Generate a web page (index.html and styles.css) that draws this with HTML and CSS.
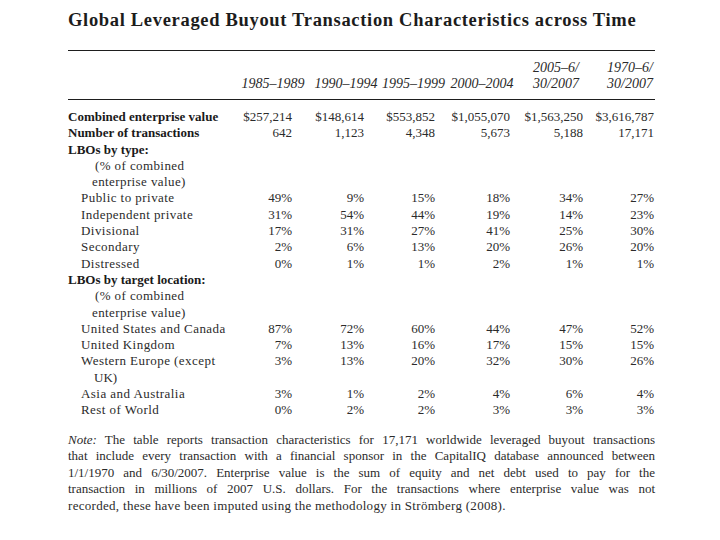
FILE: index.html
```html
<!DOCTYPE html>
<html lang="en">
<head>
<meta charset="utf-8">
<title>Global Leveraged Buyout Transaction Characteristics across Time</title>
<link rel="stylesheet" href="styles.css">
</head>
<body>
<div class="page">
  <h1 class="title">Global Leveraged Buyout Transaction Characteristics across Time</h1>
  <div class="rule"></div>
  <div class="grid head">
    <div></div>
    <div class="h">1985–1989</div>
    <div class="h">1990–1994</div>
    <div class="h">1995–1999</div>
    <div class="h">2000–2004</div>
    <div class="h">2005–6/<br>30/2007</div>
    <div class="h">1970–6/<br>30/2007</div>
  </div>
  <div class="rule"></div>
  <div class="grid body">
    <div class="l b">Combined enterprise value</div><div class="n c1">$257,214</div><div class="n c2">$148,614</div><div class="n c3">$553,852</div><div class="n c4">$1,055,070</div><div class="n c5">$1,563,250</div><div class="n c6">$3,616,787</div>
    <div class="l b">Number of transactions</div><div class="n c1">642</div><div class="n c2">1,123</div><div class="n c3">4,348</div><div class="n c4">5,673</div><div class="n c5">5,188</div><div class="n c6">17,171</div>
    <div class="l b full">LBOs by type:</div>
    <div class="l p1 full">(% of combined</div>
    <div class="l p2 full">enterprise value)</div>
    <div class="l s">Public to private</div><div class="n c1">49%</div><div class="n c2">9%</div><div class="n c3">15%</div><div class="n c4">18%</div><div class="n c5">34%</div><div class="n c6">27%</div>
    <div class="l s">Independent private</div><div class="n c1">31%</div><div class="n c2">54%</div><div class="n c3">44%</div><div class="n c4">19%</div><div class="n c5">14%</div><div class="n c6">23%</div>
    <div class="l s">Divisional</div><div class="n c1">17%</div><div class="n c2">31%</div><div class="n c3">27%</div><div class="n c4">41%</div><div class="n c5">25%</div><div class="n c6">30%</div>
    <div class="l s">Secondary</div><div class="n c1">2%</div><div class="n c2">6%</div><div class="n c3">13%</div><div class="n c4">20%</div><div class="n c5">26%</div><div class="n c6">20%</div>
    <div class="l s">Distressed</div><div class="n c1">0%</div><div class="n c2">1%</div><div class="n c3">1%</div><div class="n c4">2%</div><div class="n c5">1%</div><div class="n c6">1%</div>
    <div class="l b full">LBOs by target location:</div>
    <div class="l p1 full">(% of combined</div>
    <div class="l p2 full">enterprise value)</div>
    <div class="l s">United States and Canada</div><div class="n c1">87%</div><div class="n c2">72%</div><div class="n c3">60%</div><div class="n c4">44%</div><div class="n c5">47%</div><div class="n c6">52%</div>
    <div class="l s">United Kingdom</div><div class="n c1">7%</div><div class="n c2">13%</div><div class="n c3">16%</div><div class="n c4">17%</div><div class="n c5">15%</div><div class="n c6">15%</div>
    <div class="l s">Western Europe (except</div><div class="n c1">3%</div><div class="n c2">13%</div><div class="n c3">20%</div><div class="n c4">32%</div><div class="n c5">30%</div><div class="n c6">26%</div>
    <div class="l p3 full">UK)</div>
    <div class="l s">Asia and Australia</div><div class="n c1">3%</div><div class="n c2">1%</div><div class="n c3">2%</div><div class="n c4">4%</div><div class="n c5">6%</div><div class="n c6">4%</div>
    <div class="l s">Rest of World</div><div class="n c1">0%</div><div class="n c2">2%</div><div class="n c3">2%</div><div class="n c4">3%</div><div class="n c5">3%</div><div class="n c6">3%</div>
  </div>
  <p class="note">
    <span class="ln"><em>Note:</em> The table reports transaction characteristics for 17,171 worldwide leveraged buyout transactions</span>
    <span class="ln">that include every transaction with a financial sponsor in the CapitalIQ database announced between</span>
    <span class="ln">1/1/1970 and 6/30/2007. Enterprise value is the sum of equity and net debt used to pay for the</span>
    <span class="ln">transaction in millions of 2007 U.S. dollars. For the transactions where enterprise value was not</span>
    <span class="ln last">recorded, these have been imputed using the methodology in Strömberg (2008).</span>
  </p>
</div>
</body>
</html>
```
FILE: styles.css
```css
html, body {
  margin: 0;
  padding: 0;
  background: #ffffff;
}

.page {
  padding: 10px 0 0 68px;
  font-family: "Liberation Serif", "Times New Roman", serif;
  color: #2b2b2b;
}

.title {
  margin: 0;
  font-size: 18.5px;
  line-height: 20px;
  font-weight: bold;
  color: #1c1c1c;
  letter-spacing: 0.68px;
  white-space: nowrap;
}

.rule {
  width: 587px;
  height: 1px;
  background: #1e1e1e;
  margin-top: 20px;
}

.head + .rule {
  margin-top: 7px;
}

.grid {
  display: grid;
  grid-template-columns: 168px 74px 72px 62px 76px 72px 76px;
}

.head {
  padding-top: 9px;
  align-items: end;
}

.h {
  font-style: italic;
  font-size: 14px;
  line-height: 16px;
  text-align: center;
  color: #2a2a2a;
  white-space: nowrap;
}

.body {
  padding-top: 9px;
  font-size: 13px;
  line-height: 16.3px;
}

.l {
  white-space: nowrap;
}

.full {
  grid-column: 1 / -1;
}

.b {
  font-weight: bold;
  color: #1a1a1a;
}

.s {
  padding-left: 13px;
  letter-spacing: 0.45px;
}

.p1 {
  padding-left: 27px;
  letter-spacing: 0.4px;
}

.p2 {
  padding-left: 24px;
  letter-spacing: 0.4px;
}

.p3 {
  padding-left: 26px;
}

.n {
  text-align: right;
  white-space: nowrap;
}

.c1 { padding-right: 18px; }
.c2 { padding-right: 18px; }
.c3 { padding-right: 9px; }
.c4 { padding-right: 10px; }
.c5 { padding-right: 9px; }
.c6 { padding-right: 14px; }

.note {
  width: 587px;
  margin: 13px 0 0 0;
  font-size: 13px;
  line-height: 16.5px;
  color: #2b2b2b;
}

.ln {
  display: block;
  text-align: justify;
  text-align-last: justify;
  white-space: nowrap;
}

.ln.last {
  text-align-last: left;
  letter-spacing: 0.3px;
}
```
